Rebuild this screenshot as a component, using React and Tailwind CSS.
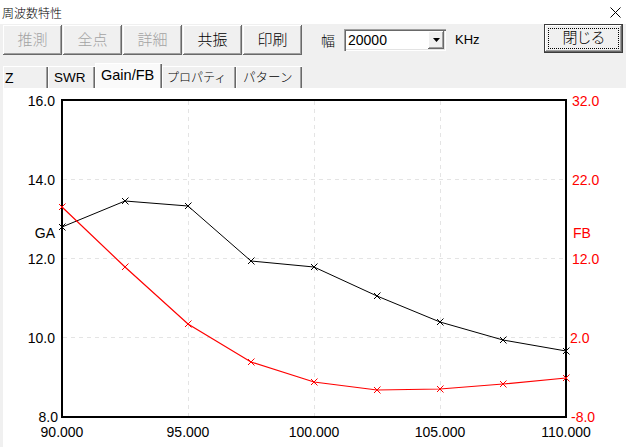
import React from "react";

const xs = [62, 125, 188, 251, 314, 377, 440, 503, 566];
const ga = [227, 201, 206, 261, 267, 296, 322, 340, 351];
const fb = [207, 267, 324, 362, 382, 390, 389, 384, 378];

function Btn({ children, disabled }) {
  return (
    <div
      className={
        "w-[59px] h-[30px] flex items-center justify-center text-[15px] font-light bg-[#f0f0f0] shadow-[inset_-1px_-1px_0_#696969,inset_1px_1px_0_#ffffff,inset_-2px_-2px_0_#a0a0a0] " +
        (disabled ? "text-[#a3a3a3]" : "text-black")
      }
    >
      {children}
    </div>
  );
}

function Tab({ children, w, pl, selected, size, light }) {
  const weight = light ? " font-light" : "";
  if (selected) {
    return (
      <div
        className={"h-[25px] flex items-center bg-[#fafafa] border-l border-t border-[#ffffff] shadow-[inset_-1px_0_0_#696969,inset_-2px_0_0_#a0a0a0]" + weight}
        style={{ width: w, paddingLeft: pl, fontSize: size }}
      >
        <span className="pb-[1px]">{children}</span>
      </div>
    );
  }
  return (
    <div
      className={"h-[22px] flex items-center border-l border-t border-[#ffffff] shadow-[inset_-1px_0_0_#696969,inset_-2px_0_0_#a0a0a0]" + weight}
      style={{ width: w, paddingLeft: pl, fontSize: size }}
    >
      <span className="pt-[1px]">{children}</span>
    </div>
  );
}

function Marker({ x, y, color }) {
  return (
    <g stroke={color} strokeWidth="1">
      <line x1={x - 3} y1={y - 3} x2={x + 3.5} y2={y + 3.5} />
      <line x1={x - 3} y1={y + 3} x2={x + 3.5} y2={y - 3.5} />
    </g>
  );
}

function Chart() {
  const hy = [179.5, 258.5, 337.5];
  const vx = [188.5, 314.5, 440.5];
  const leftLabels = [
    ["16.0", 106],
    ["14.0", 185],
    ["12.0", 264],
    ["10.0", 343],
  ];
  const rightLabels = [
    ["32.0", 106, 572],
    ["22.0", 185, 572],
    ["12.0", 264, 572],
    ["2.0", 343, 570],
    ["-8.0", 422, 571],
  ];
  const bottom = [
    ["90.000", 62],
    ["95.000", 188],
    ["100.000", 314],
    ["105.000", 440],
    ["110.000", 566],
  ];
  const fam = "Liberation Sans, Arial, sans-serif";
  return (
    <svg width="623" height="359" viewBox="3 88 623 359" className="block">
      {hy.map((y) => (
        <line key={"h" + y} x1="63" x2="565" y1={y} y2={y} stroke="#e4e4e4" strokeDasharray="4 4" />
      ))}
      {vx.map((x) => (
        <line key={"v" + x} y1="101" y2="416" x1={x} x2={x} stroke="#e4e4e4" strokeDasharray="4 4" />
      ))}
      <rect x="62" y="100" width="504" height="317" fill="none" stroke="#000" strokeWidth="2" />
      <polyline
        points={xs.map((x, i) => `${x},${ga[i]}`).join(" ")}
        fill="none"
        stroke="#000"
        strokeWidth="1"
      />
      <polyline
        points={xs.map((x, i) => `${x},${fb[i]}`).join(" ")}
        fill="none"
        stroke="#ff0000"
        strokeWidth="1.2"
      />
      {xs.map((x, i) => (
        <Marker key={"g" + i} x={x} y={ga[i]} color="#000" />
      ))}
      {xs.map((x, i) => (
        <Marker key={"f" + i} x={x} y={fb[i]} color="#ff0000" />
      ))}
      <g fontFamily={fam} fontSize="14" fill="#000">
        {leftLabels.map(([t, y]) => (
          <text key={t} x="55" y={y} textAnchor="end">
            {t}
          </text>
        ))}
        <text x="58" y="422" textAnchor="end">8.0</text>
        <text x="55" y="238" textAnchor="end">GA</text>
        {bottom.map(([t, x]) => (
          <text key={t} x={x} y="437" textAnchor="middle">
            {t}
          </text>
        ))}
      </g>
      <g fontFamily={fam} fontSize="14" fill="#ff0000">
        {rightLabels.map(([t, y, x]) => (
          <text key={t} x={x} y={y}>
            {t}
          </text>
        ))}
        <text x="573" y="238">FB</text>
      </g>
    </svg>
  );
}

export default function App() {
  return (
    <div className="w-[626px] h-[447px] bg-[#f0f0f0] flex flex-col overflow-hidden text-black font-[family-name:Liberation_Sans,Noto_Sans_CJK_JP,sans-serif]">
      {/* title bar */}
      <div className="h-[24px] bg-white flex items-center justify-between pl-[2px] pr-[5px]">
        <span className="text-[12px] pt-[2px] font-light font-[family-name:Noto_Sans_CJK_JP,sans-serif]">周波数特性</span>
        <svg width="11" height="11" viewBox="0 0 11 11" className="mt-[1px]">
          <line x1="0.5" y1="0.5" x2="10.5" y2="10.5" stroke="#000" strokeWidth="1" />
          <line x1="0.5" y1="10.5" x2="10.5" y2="0.5" stroke="#000" strokeWidth="1" />
        </svg>
      </div>

      {/* toolbar */}
      <div className="h-[32px] flex items-center pl-[3px]">
        <div className="flex gap-[1px]">
          <Btn disabled>推測</Btn>
          <Btn disabled>全点</Btn>
          <Btn disabled>詳細</Btn>
          <Btn>共振</Btn>
          <Btn>印刷</Btn>
        </div>
        <span className="ml-[19px] text-[14px] font-light font-[family-name:Noto_Sans_CJK_JP,sans-serif]">幅</span>
        <div className="ml-[9px] w-[102px] h-[22px] bg-white flex items-stretch shadow-[inset_1px_1px_0_#a0a0a0,inset_2px_2px_0_#696969,inset_-1px_-1px_0_#ffffff,inset_-2px_-2px_0_#e3e3e3] p-[2px]">
          <span className="flex-1 text-[14px] leading-[18px] pl-[2px]">20000</span>
          <div className="w-[16px] bg-[#f0f0f0] flex items-center justify-center shadow-[inset_-1px_-1px_0_#696969,inset_1px_1px_0_#ffffff,inset_-2px_-2px_0_#a0a0a0]">
            <svg width="7" height="4" viewBox="0 0 7 4">
              <polygon points="0,0 7,0 3.5,4" fill="#000" />
            </svg>
          </div>
        </div>
        <span className="ml-[9px] text-[13px]">KHz</span>
        <div className="ml-auto mr-[3px] self-start w-[79px] h-[29px] border border-[#3c3c3c] bg-[#f0f0f0] p-[3px] shadow-[inset_-1px_-1px_0_#696969,inset_1px_1px_0_#ffffff,inset_-2px_-2px_0_#a0a0a0]">
          <div className="h-full border border-dotted border-black flex items-center justify-center text-[15px] font-light tracking-[-1px]">
            閉じる
          </div>
        </div>
      </div>

      {/* tabs */}
      <div className="h-[32px] flex items-end pl-[3px]">
        <Tab w={45} pl={1} size={14}>Z</Tab>
        <Tab w={47} pl={5} size={13.5}>SWR</Tab>
        <Tab w={67} pl={5} size={14.5} selected>Gain/FB</Tab>
        <Tab w={74} pl={4} size={12} light>プロパティ</Tab>
        <Tab w={66} pl={6} size={12.5} light>パターン</Tab>
      </div>

      {/* chart panel */}
      <div className="flex-1 ml-[3px] bg-white overflow-hidden">
        <Chart />
      </div>
    </div>
  );
}
